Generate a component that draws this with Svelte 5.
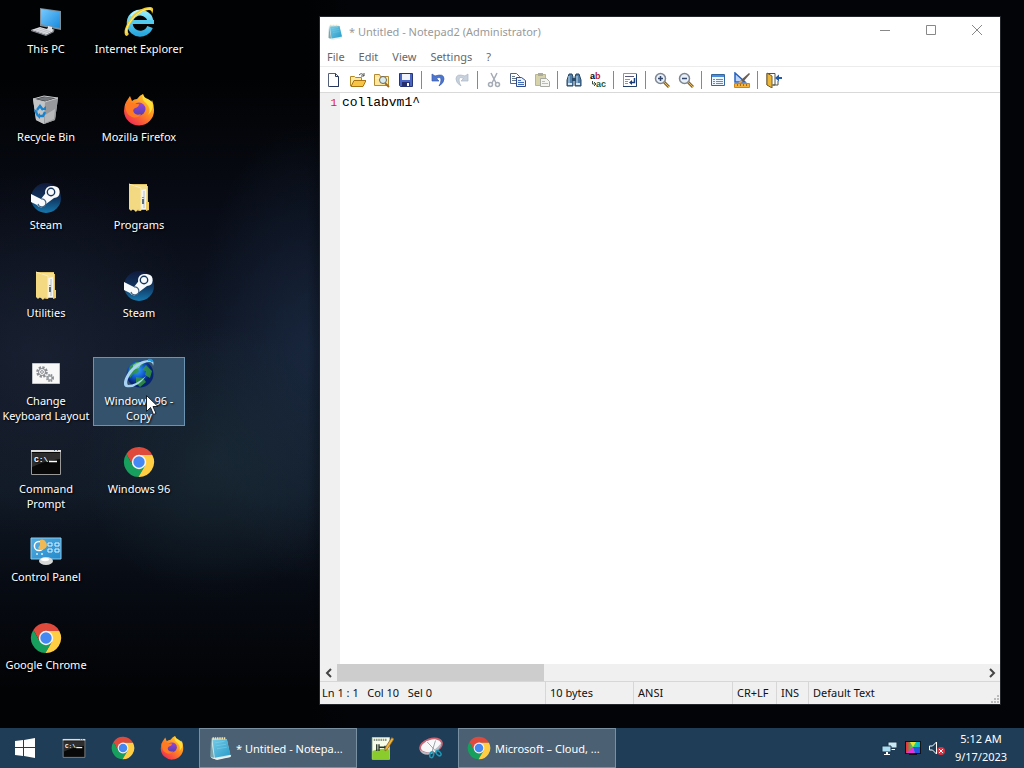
<script lang="ts">
  type Shortcut = { icon: string; label: string; selected?: boolean };
  type Task = { icon: string; label: string; open?: boolean };

  const shortcuts: Shortcut[] = [
    { icon: 'pc', label: 'This PC' },
    { icon: 'bin', label: 'Recycle Bin' },
    { icon: 'steam', label: 'Steam' },
    { icon: 'folder', label: 'Utilities' },
    { icon: 'gears', label: 'Change\nKeyboard Layout' },
    { icon: 'cmd', label: 'Command\nPrompt' },
    { icon: 'control', label: 'Control Panel' },
    { icon: 'chrome', label: 'Google Chrome' },
    { icon: 'ie', label: 'Internet Explorer' },
    { icon: 'firefox', label: 'Mozilla Firefox' },
    { icon: 'folder', label: 'Programs' },
    { icon: 'steam', label: 'Steam' },
    { icon: 'globe', label: 'Windows 96 -\nCopy', selected: true },
    { icon: 'chrome', label: 'Windows 96' },
  ];

  const menus = ['File', 'Edit', 'View', 'Settings', '?'];

  const tools = [
    ['New', 'Open', 'Browse', 'Save'],
    ['Undo', 'Redo'],
    ['Cut', 'Copy', 'Paste'],
    ['Find', 'Replace'],
    ['Word Wrap'],
    ['Zoom In', 'Zoom Out'],
    ['Scheme', 'Customize'],
    ['Exit'],
  ];
  const disabledTools = ['Redo', 'Cut', 'Paste'];

  const status = ['Ln 1 : 1   Col 10   Sel 0', '10 bytes', 'ANSI', 'CR+LF', 'INS', 'Default Text'];

  const tasks: Task[] = [
    { icon: 'cmd', label: 'Command Prompt' },
    { icon: 'chrome', label: 'Google Chrome' },
    { icon: 'firefox', label: 'Mozilla Firefox' },
    { icon: 'notepad', label: '* Untitled - Notepa...', open: true },
    { icon: 'notepadpp', label: 'Notepad++' },
    { icon: 'snip', label: 'Snipping Tool' },
    { icon: 'chrome', label: 'Microsoft – Cloud, ...', open: true },
  ];

  let text = $state('collabvm1^');
</script>

{#snippet appIcon(name: string)}
  <svg class="app-icon" viewBox="0 0 32 32" aria-hidden="true">
    {#if name === 'pc'}
      <path d="M10 2l21 3v19l-21-4z" fill="#7d8d99" />
      <path d="M11 3l19 3v16l-19-4z" fill="url(#screen)" />
      <path d="M18 20l4 1v2l3 1-6 2-4-2 3-2z" fill="#dfe5e9" />
      <path d="M1 24l9-3 14 4-8 4z" fill="#dcdde2" />
      <path d="M1 24l15 5 8-4v1l-8 4-15-5z" fill="#8b8e96" />
      <path d="M6 23l13 4M9 22l12 4M4 24l12 4" stroke="#a9acb4" stroke-width=".6" />
    {:else if name === 'bin'}
      <path d="M3 5l11-3 14 2-3 22-11 4-8-4z" fill="#b6b7ba" />
      <path d="M3 5l12 3-1 22-8-4z" fill="#c3c4c6" />
      <path d="M15 8l13-4-3 22-11 4z" fill="#97989b" />
      <path d="M3 5l11-3 14 2-13 4z" fill="#3f4347" stroke="#c6c7c9" />
      <path d="M7 5l8-2 9 1-8 3z" fill="#74787c" />
      <path d="M15 21l10-6-1 10-9 4z" fill="#cfcfcf" opacity=".6" />
      <g fill="none" stroke="#1783cf" stroke-width="2.4">
        <path d="M7 16l3-4 3 4M15 18l-2 4h-3M8 22l-2-4" />
      </g>
      <path d="M11 16h5v-4zM10 19v6l-3-3zM5 19l-1-4 4 2z" fill="#1783cf" />
    {:else if name === 'steam'}
      <circle cx="16" cy="16" r="15" fill="url(#steam)" />
      <path d="M1 12l10 5 7-9a6 6 0 1 1 6 8l-8 6a5 5 0 0 1-9 1l-6-3z" fill="#f8fafc" />
      <circle cx="21" cy="10" r="6" fill="#f8fafc" />
      <circle cx="21" cy="10" r="3.700" fill="#f8fafc" stroke="#17365c" stroke-width="1.400" />
      <path d="M8 22a4 4 0 1 0 3-5" fill="none" stroke="#426283" stroke-width="1.200" />
    {:else if name === 'folder'}
      <path d="M6 2h18v2h1v16h1v8h-7l-2 1-11-2z" fill="#e3c463" />
      <path d="M12 3h12v24H12z" fill="#f5df91" />
      <path d="M18 8l5-1v20h-5z" fill="#f4f5f0" />
      <path d="M20 9h2v17h-2z" fill="#d5dadd" />
      <path d="M19 17h2v5h-2z" fill="#5c6d7c" /><path d="M19 15h2v1h-2z" fill="#87a846" />
      <path d="M6 2l12 4v23l-3-2-2 3-3-3-2 2-2-2z" fill="#f3da82" />
      <path d="M6 2l12 4v22" fill="none" stroke="#fbecb5" />
      <path d="M23 20h3v8l-3 1z" fill="#efcb65" />
    {:else if name === 'gears'}
      <path d="M2.500 5.500h27v20h-27z" fill="#f8f8f8" stroke="#bfc5c9" />
      <g fill="none" stroke="#8b8f93">
        <circle cx="12" cy="14" r="4.500" stroke-width="2.600" stroke-dasharray="2.200 1.300" />
        <circle cx="12" cy="14" r="3.500" /><circle cx="12" cy="14" r="1.400" />
        <circle cx="20" cy="20" r="3" stroke-width="2" stroke-dasharray="1.600 .8" />
        <circle cx="20" cy="20" r="2" />
      </g>
    {:else if name === 'cmd'}
      <path d="M1.500 4.500h29v24h-29z" fill="#080808" stroke="#999" />
      <path d="M1 4h30v2H1z" fill="#ddd" />
      <path d="M2 7h28v6Q14 15 2 21z" fill="#444" opacity=".65" />
      <path d="M24 4h1v1h-1zM27 4h1v1h-1z" fill="#567" />
      <text x="4" y="16" class="prompt">C:\</text>
      <path d="M19 15.500h8" stroke="#fff" stroke-width="1.500" />
    {:else if name === 'control'}
      <path d="M1 4h30v21H1z" fill="url(#panel)" stroke="#8dccef" />
      <circle cx="9" cy="12" r="4.600" fill="#4aa6df" stroke="#fff" stroke-width="1.500" />
      <path d="M10 11V6a5 5 0 1 1-2 8z" fill="#f0b955" />
      <path d="M18 9h4v3h-4zM25 9h4v3h-4zM18 15h4v3h-4zM25 15h4v3h-4z" fill="#288acb" stroke="#e5f5ff" />
      <circle cx="7" cy="20" r="1" fill="#d9efff" /><circle cx="12" cy="20" r="1" fill="#d9efff" />
      <ellipse cx="16" cy="27" rx="7" ry="4" fill="#d5d8d6" /><ellipse cx="15" cy="25.500" rx="4" ry="1.700" fill="#fff" />
    {:else if name === 'chrome'}
      <path d="M16 9L3.300 8A15 15 0 0 1 29.300 9zM9.900 19.500L3.300 8 16 9z" fill="#de4a3c" />
      <path d="M9.900 19.500L3.300 8a15 15 0 0 0 12.100 23l6.700-11.500z" fill="#17a05d" />
      <path d="M22.100 19.500L15.400 31A15 15 0 0 0 29.300 9H16z" fill="#ffce43" />
      <circle cx="16" cy="16" r="7.200" fill="#f5f5f5" /><circle cx="16" cy="16" r="5.700" fill="#4587f3" />
    {:else if name === 'firefox'}
      <path d="M3 8l4-6 2 5q2-2 5-2 3-4 6-5l1 5q4 0 7 4l1-3q2 5 2 10A15 15 0 0 1 1 17Q1 12 3 8z" fill="url(#fox)" />
      <path d="M20 0q-2 6 3 9 6 6 2 12 7-7 4-13-2-2-4-3-4-1-5-5z" fill="#ffdf35" />
      <circle cx="16" cy="15" r="6.500" fill="url(#foxcore)" />
      <path d="M2 10q6-3 10 0h4q0 3-4 4-3 2-1 5 3 3 7 1-3 5-9 3-5-2-6-7z" fill="#ff7a22" />
    {:else if name === 'ie'}
      <path d="M27 21A10.500 10.500 0 1 1 27.500 15" fill="none" stroke="url(#ieblue)" stroke-width="6" />
      <path d="M9 16h22" stroke="#54c9ee" stroke-width="4" />
      <path d="M8 10q4-6 11-5" fill="none" stroke="#c7f4ff" stroke-width="1.500" />
      <path d="M4 30C-4 29 9 1 27 1q5 0 2 7 0-4-3-4C14 4 1 24 6 28z" fill="#f3ce28" />
      <path d="M3 27C3 18 16 2 28 3" fill="none" stroke="#fff19c" />
    {:else if name === 'globe'}
      <circle cx="17" cy="16" r="13.500" fill="url(#earth)" />
      <path d="M13 4h8l-2 4-4 1 1 5-6 2-3 4-2-5 2-7zM23 7l6 6-2 7-5-3 1-4-4-1zM13 19l7 1 3 4-6 5-4-4z" fill="#35953e" opacity=".85" />
      <path d="M10 7q5-4 9-2l-3 5-6 2z" fill="#a0ed9b" opacity=".65" />
      <path d="M3 29C-4 27 8 2 26 2q6-1 4 6 0-4-4-4C13 5 1 23 5 27q8 0 18-9-9 13-20 11z" fill="#a7d2f4" />
      <path d="M25 2q4-1 4 2" fill="none" stroke="#159bec" stroke-width="2" />
    {:else if name === 'notepad'}
      <path d="M5 3l20 1 5 24-20 3-6-2z" fill="#c7e4e9" />
      <path d="M4 29l18-1 9-3-1 3-18 4z" fill="#e8f1ef" />
      <path d="M6 5l19-1 5 21-21 4z" fill="url(#pad)" />
      <path d="M4 4l4 25-5-1z" fill="#7ca5ab" />
      <path d="M6 3h18" stroke="#f5dfa4" stroke-width="3" stroke-dasharray="2 1" />
      <path d="M10 9l12-2M11 13l13-2M12 17l13-2" stroke="#9bdcf2" opacity=".5" />
    {:else if name === 'notepadpp'}
      <path d="M3 2h23v29H3z" fill="#f7fce9" stroke="#c3d4b4" />
      <path d="M3 20q12-5 23-2v13H3z" fill="#8acc2b" />
      <path d="M9 11v9M12 11v9M12 15h6M20 13v4M18 15h5" stroke="#233324" stroke-width="1.800" />
      <path d="M5 5h18" stroke="#8b9787" stroke-width="3" stroke-dasharray="2 1" />
      <path d="M29 2l3 2-9 14-3 2v-4z" fill="#edb538" stroke="#865a2a" />
    {:else if name === 'snip'}
      <ellipse cx="16" cy="13" rx="15" ry="9" transform="rotate(-18 16 13)" fill="#f8f8fa" stroke="#cc6574" stroke-width="2.500" />
      <path d="M1 18q13 11 29-9-1 12-18 16Q3 25 1 18z" fill="#b8bcc7" />
      <path d="M10 7l13 15M22 5l-6 17" stroke="#fff" stroke-width="2.500" /><path d="M11 8l12 13M22 6l-5 16" stroke="#75828c" />
      <ellipse cx="17" cy="25" rx="2.500" ry="4" transform="rotate(15 17 25)" fill="none" stroke="#1b99b7" stroke-width="2" />
      <ellipse cx="26" cy="23" rx="2.500" ry="4" transform="rotate(-45 26 23)" fill="none" stroke="#1b99b7" stroke-width="2" />
    {/if}
  </svg>
{/snippet}

{#snippet toolIcon(name: string)}
  <svg class="tool-icon" viewBox="0 0 16 16" aria-hidden="true">
    {#if name === 'New'}
      <path d="M2.500 1.500h7l3 3v10h-10z" fill="#fff" stroke="#566079" /><path d="M9.500 1.500v3h3M12.500 5v9.500h-9" fill="none" stroke="#25355c" />
    {:else if name === 'Open'}
      <path d="M.5 14V4.500h4l1 1h6v3" fill="#ffe9a2" stroke="#b48821" /><path d="M1 14.500l3-6h12l-3 6z" fill="#f8c445" stroke="#a87410" />
      <path d="M9 3q3-3 5 1m0-3v3h-3" fill="none" stroke="#535353" />
    {:else if name === 'Browse'}
      <path d="M.5 13.500v-11h5l1 2h8v9z" fill="#ffe69a" stroke="#b18a34" /><path d="M1 6h13" stroke="#fff7ca" />
      <circle cx="9" cy="8" r="3.500" fill="#dbecee" stroke="#666" /><path d="M11 11l4 4" stroke="#9f6c24" stroke-width="2" />
    {:else if name === 'Save'}
      <path d="M1.500 1.500h13v13h-12l-1-1z" fill="#4966c4" stroke="#273574" /><path d="M4 2h8v6H4z" fill="#f0f2fb" />
      <path d="M4 10h8v4H4z" fill="#27306d" /><path d="M9 11h2v3H9z" fill="#fff" />
    {:else if name === 'Undo' || name === 'Redo'}
      <g transform={name === 'Redo' ? 'matrix(-1 0 0 1 16 0)' : undefined}>
        <path d="M2 2v7h7L6.500 6.500Q11 4 11 8q0 3-2 6 5-3 5-7 0-6-9-3z" fill={name === 'Redo' ? '#c9d2dc' : '#4d76cf'} stroke={name === 'Redo' ? '#a9b8c7' : '#3a5cae'} stroke-width=".7" />
      </g>
    {:else if name === 'Cut'}
      <g fill="none" stroke="#a5acb5" stroke-width="1.500"><path d="M5 1l5 10M11 1L6 11" /><circle cx="4.500" cy="12.500" r="2" /><circle cx="11.500" cy="12.500" r="2" /></g>
    {:else if name === 'Copy'}
      <path d="M.5 1.500h6l3 3v7h-9z" fill="#fff" stroke="#52648c" /><path d="M2 4.500h3M2 6.500h5M2 8.500h5" stroke="#678" />
      <path d="M6.500 5.500h5l4 3v6h-9z" fill="#eaf1ff" stroke="#304a8b" /><path d="M8 8.500h3M8 10.500h6M8 12.500h6" stroke="#446aba" />
    {:else if name === 'Paste'}
      <path d="M1.500 2.500h10v11h-10z" fill="#d5d2ac" stroke="#b8b690" /><path d="M4 1h5v3H4z" fill="#abac9c" />
      <path d="M6.500 6.500h6l3 3v5h-9z" fill="#f4f5f1" stroke="#a7aaa3" /><path d="M8 9.500h3M8 11.500h6" stroke="#b9bdb8" />
    {:else if name === 'Find'}
      <path d="M3 2h3l1 3v9H1V8zM10 2h3l2 6v6H9V5z" fill="#547fa8" stroke="#244560" /><path d="M6 6h4v3H6z" fill="#294a68" /><path d="M3 4v7M11 4v7" stroke="#c2def1" />
      <path d="M2 12h4M10 12h4" stroke="#d8e9f5" stroke-width="2" />
    {:else if name === 'Replace'}
      <text x="0" y="7" class="replace">a<tspan fill="#b01e36">b</tspan></text><text x="6" y="15" class="replace" fill="#285a36">ac</text>
      <path d="M2.500 9v3h3M4 10l2 2-2 2" fill="none" stroke="#3a4d42" />
    {:else if name === 'Word Wrap'}
      <path d="M1.500 1.500h13v13h-13z" fill="#fff" stroke="#8397ae" /><path d="M1 14.500h13.500V2" fill="none" stroke="#203d69" />
      <path d="M3 4.500h9" stroke="#557" /><path d="M3 7.500h5M3 9.500h3M3 11.500h3" stroke="#e07a53" /><path d="M12.500 6v4.500H9" fill="none" stroke="#173b76" stroke-width="1.500" /><path d="M10 8v5l-3-2.500z" fill="#173b76" />
    {:else if name === 'Zoom In' || name === 'Zoom Out'}
      <path d="M9 9l6 6" stroke="#806846" stroke-width="3" /><path d="M10 10l5 5" stroke="#e6bc5d" />
      <circle cx="6.500" cy="6.500" r="5" fill="#e9f0f7" stroke="#7d8794" stroke-width="1.500" /><path d="M4 6.500h5" stroke="#33476d" stroke-width="1.500" />
      {#if name === 'Zoom In'}<path d="M6.500 4v5" stroke="#33476d" stroke-width="1.500" />{/if}
    {:else if name === 'Scheme'}
      <path d="M1.500 2.500h13v11h-13z" fill="#eef6ff" stroke="#35669b" /><path d="M2 4h12" stroke="#4d8be0" stroke-width="2" /><path d="M3 7.500h2m1 0h7M3 9.500h2m1 0h7M3 11.500h2m1 0h7" stroke="#668dc1" />
    {:else if name === 'Customize'}
      <path d="M1 1v9h10z" fill="#bdd6ff" stroke="#2861ba" stroke-width="1.500" /><path d="M15 1L7 8l-2 3 4-1 7-8z" fill="#6b5d50" /><path d="M5 11l3-2" stroke="#e9a14b" stroke-width="2" />
      <path d="M.5 11.500h15v4H.5z" fill="#f1b13c" stroke="#c9861f" /><path d="M3.500 12v2M6.500 12v2M9.500 12v2M12.500 12v2" stroke="#a26b18" />
    {:else if name === 'Exit'}
      <path d="M1 1.500h8V13H1z" fill="#fff" stroke="#525446" /><path d="M1 1l5 3v12l-5-3z" fill="#eab73b" stroke="#765c26" /><path d="M7 13h5V9" fill="none" stroke="#525446" />
      <path d="M16 7h-3V9.500L9 6l4-3.500V5h3z" fill="#235ba7" />
    {/if}
  </svg>
{/snippet}

<svg class="defs" aria-hidden="true">
  <defs>
    <linearGradient id="screen" x2="1" y2="1"><stop stop-color="#78caff" /><stop offset="1" stop-color="#168bdd" /></linearGradient>
    <linearGradient id="steam" x2="0" y2="1"><stop stop-color="#101a3c" /><stop offset=".5" stop-color="#11345e" /><stop offset="1" stop-color="#1578ae" /></linearGradient>
    <linearGradient id="panel" x2="1" y2="1"><stop stop-color="#53acdf" /><stop offset="1" stop-color="#248bcc" /></linearGradient>
    <linearGradient id="fox" x1="1" x2=".2" y2="1"><stop stop-color="#ffe13c" /><stop offset=".5" stop-color="#ff8b20" /><stop offset="1" stop-color="#f12657" /></linearGradient>
    <linearGradient id="foxcore" x2="0" y2="1"><stop stop-color="#9b45d5" /><stop offset="1" stop-color="#5440b3" /></linearGradient>
    <linearGradient id="ieblue" x2="0" y2="1"><stop stop-color="#8ce9fb" /><stop offset="1" stop-color="#29a8df" /></linearGradient>
    <radialGradient id="earth" cx=".4" cy=".35"><stop stop-color="#32a4ff" /><stop offset=".6" stop-color="#1155cb" /><stop offset="1" stop-color="#072474" /></radialGradient>
    <linearGradient id="pad" x2="1" y2="1"><stop stop-color="#75cbe6" /><stop offset="1" stop-color="#279bc9" /></linearGradient>
    <linearGradient id="rainbow"><stop stop-color="#f02b35" /><stop offset=".5" stop-color="#2adf65" /><stop offset="1" stop-color="#06b6ef" /></linearGradient>
  </defs>
</svg>

<div class="screen">
  <main class="desktop">
    <nav class="shortcuts" aria-label="Desktop">
      {#each shortcuts as item}
        <button class="shortcut" class:shortcut--selected={item.selected}>
          {@render appIcon(item.icon)}
          <span>{item.label}</span>
          {#if item.selected}
            <svg class="cursor" viewBox="0 0 12 20" aria-hidden="true">
              <path d="M.5.5v16l4-4 3 7 2.500-1-3-7h5z" fill="#fff" stroke="#17202b" />
            </svg>
          {/if}
        </button>
      {/each}
    </nav>

    <section class="window" aria-label="Notepad2">
      <header class="titlebar">
        <div class="titlebar__icon">{@render appIcon('notepad')}</div>
        <h1>* Untitled - Notepad2 (Administrator)</h1>
        <button aria-label="Minimize"><svg viewBox="0 0 12 12"><path d="M1 6.500h10" /></svg></button>
        <button aria-label="Maximize"><svg viewBox="0 0 12 12"><path d="M1.500 1.500h9v9h-9z" /></svg></button>
        <button aria-label="Close"><svg viewBox="0 0 12 12"><path d="M1 1l10 10M11 1L1 11" /></svg></button>
      </header>

      <div class="menubar">
        {#each menus as menu}
          <button>{menu}</button>
        {/each}
      </div>

      <div class="toolbar" role="toolbar" aria-label="Tools">
        {#each tools as group}
          <div class="toolbar__group">
            {#each group as tool}
              <button aria-label={tool} disabled={disabledTools.includes(tool)}>{@render toolIcon(tool)}</button>
            {/each}
          </div>
        {/each}
      </div>

      <div class="editor">
        <div class="editor__gutter">1</div>
        <textarea aria-label="Text" spellcheck="false" bind:value={text}></textarea>
      </div>

      <div class="scrollbar">
        <button aria-label="Scroll left"><svg viewBox="0 0 8 10"><path d="M6 1L2 5l4 4" /></svg></button>
        <div class="scrollbar__track"><div class="scrollbar__thumb"></div></div>
        <button aria-label="Scroll right"><svg viewBox="0 0 8 10"><path d="M2 1l4 4-4 4" /></svg></button>
      </div>

      <footer class="statusbar">
        {#each status as part}
          <span>{part}</span>
        {/each}
        <svg class="statusbar__grip" viewBox="0 0 9 9" aria-hidden="true">
          <path d="M7 1h2v2H7zM7 4h2v2H7zM4 4h2v2H4zM7 7h2v2H7zM4 7h2v2H4zM1 7h2v2H1z" fill="#bbb" />
        </svg>
      </footer>
    </section>
  </main>

  <footer class="taskbar">
    <button class="task" aria-label="Start">
      <svg class="start-icon" viewBox="0 0 20 20"><path d="M0 3l8-1v7H0zM9 2l11-2v9H9zM0 10h8v8l-8-1zM9 10h11v10L9 18z" fill="#fff" /></svg>
    </button>
    {#each tasks as task}
      <button class="task" class:task--open={task.open} aria-label={task.label}>
        {@render appIcon(task.icon)}
        {#if task.open}<span>{task.label}</span>{/if}
      </button>
    {/each}
    <div class="tray">
      <button aria-label="Network">
        <svg viewBox="0 0 16 16"><path d="M7 2h9v6H7z" fill="#c9e9f5" stroke="#1c3144" /><path d="M10 9h4v1h-4z" fill="#fff" /><path d="M1 6h9v6H1z" fill="#a9dcf1" stroke="#1c3144" /><path d="M5 12h2v2h2v1H3v-1h2z" fill="#fff" /></svg>
      </button>
      <button aria-label="Display">
        <svg viewBox="0 0 16 16"><path d="M0 1h16v13H0z" fill="#111" /><path d="M1 2h14v11H1z" fill="url(#rainbow)" /><path d="M8 7L1 13h9z" fill="#e532dc" /><path d="M8 7l2 6h5V7z" fill="#2455e7" /><path d="M8 7L5 2h6z" fill="#ece42c" /><path d="M4 14h8v1H4z" fill="#111" /></svg>
      </button>
      <button aria-label="Volume muted">
        <svg viewBox="0 0 16 16"><path d="M.5 6h3l4-4v12l-4-4h-3z" fill="none" stroke="#fff" /><circle cx="12" cy="11" r="4" fill="#d83443" /><path d="M10 9l4 4M14 9l-4 4" stroke="#fff" /></svg>
      </button>
      <button class="clock">5:12 AM<br />9/17/2023</button>
    </div>
  </footer>
</div>

<style>
  :global(body) {
    margin: 0;
    font-family: "Noto Sans", "Open Sans", sans-serif;
    font-size: 11px;
  }

  button {
    margin: 0;
    padding: 0;
    border: 0;
    background: none;
    color: inherit;
    font: inherit;
  }

  .defs {
    position: absolute;
    width: 0;
    height: 0;
  }

  .screen {
    display: flex;
    flex-direction: column;
    min-height: 100vh;
    background:
      linear-gradient(90deg, transparent 30%, #020407 34%),
      radial-gradient(ellipse 13% 18% at 21% 60%, rgba(30, 52, 62, 0.5), transparent),
      radial-gradient(ellipse 11% 30% at 30% 46%, rgba(29, 47, 74, 0.6), transparent),
      radial-gradient(ellipse 16% 24% at 4% 46%, rgba(32, 40, 58, 0.5), transparent),
      linear-gradient(#010203 10%, #090d18 30%, #101827 46%, #101925 64%, #070b13 76%, #020305 90%);
  }

  .desktop {
    position: relative;
    flex: 1;
  }

  .shortcuts {
    display: grid;
    grid-auto-flow: column;
    grid-template-rows: repeat(8, 88px);
    grid-auto-columns: 92px;
    column-gap: 1px;
    justify-content: start;
    padding-top: 5px;
  }

  .shortcut {
    position: relative;
    display: flex;
    flex-direction: column;
    align-items: center;
    align-self: start;
    gap: 3px;
    min-height: 69px;
    border: 1px solid transparent;
    box-sizing: border-box;
    color: #fff;
    line-height: 15px;
    white-space: pre;
    text-shadow: 1px 1px 2px #000;
  }

  .shortcut .app-icon {
    flex: none;
  }

  .shortcut--selected {
    border-color: #6c93b2;
    background: #34526c;
  }

  .app-icon {
    display: block;
    width: 32px;
    height: 32px;
  }

  .prompt {
    font: bold 8px "Liberation Mono", monospace;
    fill: #fff;
  }

  .cursor {
    position: absolute;
    left: 52px;
    top: 37px;
    width: 12px;
    height: 20px;
  }

  .window {
    position: absolute;
    inset: 17px 24px 24px 320px;
    display: flex;
    flex-direction: column;
    background: #fff;
    box-shadow: 0 0 0 1px #23262a;
  }

  .titlebar {
    display: flex;
    align-items: center;
    height: 29px;
    color: #999;
  }

  .titlebar__icon {
    padding: 0 6px 0 7px;
  }

  .titlebar__icon .app-icon {
    width: 16px;
    height: 16px;
  }

  .titlebar h1 {
    flex: 1;
    margin: 0;
    font-size: 11px;
    font-weight: 400;
  }

  .titlebar button {
    width: 46px;
    height: 29px;
  }

  .titlebar button svg {
    width: 12px;
    height: 12px;
    fill: none;
    stroke: #888;
  }

  .menubar {
    display: flex;
    height: 20px;
    border-bottom: 1px solid #ececec;
    color: #666;
  }

  .menubar button {
    padding: 0 7px;
  }

  .toolbar {
    display: flex;
    align-items: center;
    height: 25px;
    padding-left: 2px;
    border-bottom: 1px solid #d9d9d9;
  }

  .toolbar__group {
    display: flex;
    align-items: center;
  }

  .toolbar__group + .toolbar__group::before {
    content: "";
    width: 1px;
    height: 18px;
    margin: 0 4px 0 3px;
    background: #888;
  }

  .toolbar button {
    display: grid;
    place-items: center;
    width: 24px;
    height: 22px;
  }

  .tool-icon {
    width: 16px;
    height: 16px;
  }

  .replace {
    font: bold 9px "Liberation Sans", sans-serif;
  }

  .editor {
    display: flex;
    flex: 1;
    min-height: 0;
    font: 13px/20px "Liberation Mono", monospace;
  }

  .editor__gutter {
    width: 20px;
    padding-right: 3px;
    box-sizing: border-box;
    background: #f0f0f0;
    color: #e02020;
    font-size: 11px;
    text-align: right;
  }

  textarea {
    flex: 1;
    padding: 0 2px;
    border: 0;
    outline: 0;
    resize: none;
    background: #fff;
    color: #000;
    font: inherit;
  }

  .scrollbar {
    display: flex;
    height: 17px;
    background: #f0f0f0;
  }

  .scrollbar button {
    display: grid;
    place-items: center;
    width: 17px;
  }

  .scrollbar button svg {
    width: 8px;
    height: 10px;
    fill: none;
    stroke: #444;
    stroke-width: 2;
  }

  .scrollbar__track {
    flex: 1;
  }

  .scrollbar__thumb {
    width: 32%;
    height: 100%;
    background: #cdcdcd;
  }

  .statusbar {
    position: relative;
    display: grid;
    grid-template-columns: 225px 88px 99px 44px 32px 1fr;
    height: 22px;
    border-top: 1px solid #d7d7d7;
    background: #f0f0f0;
    color: #111;
    line-height: 22px;
    white-space: pre;
  }

  .statusbar span {
    padding-left: 4px;
    border-left: 1px solid #d7d7d7;
  }

  .statusbar span:first-child {
    padding-left: 2px;
    border-left: 0;
  }

  .statusbar__grip {
    position: absolute;
    right: 1px;
    bottom: 1px;
    width: 9px;
    height: 9px;
  }

  .taskbar {
    display: flex;
    gap: 1px;
    height: 40px;
    background: #1f3d56;
    color: #fff;
  }

  .task {
    display: flex;
    align-items: center;
    justify-content: center;
    width: 48px;
    white-space: nowrap;
  }

  .task:first-child {
    width: 49px;
  }

  .task .app-icon {
    flex: none;
    width: 24px;
    height: 24px;
  }

  .start-icon {
    width: 20px;
    height: 20px;
  }

  .task--open {
    justify-content: start;
    gap: 4px;
    box-sizing: border-box;
    width: 158px;
    margin-left: 2px;
    padding: 0 8px;
    border: 1px solid #7890a2;
    background: #4b6072;
  }

  .tray {
    display: flex;
    align-items: center;
    gap: 8px;
    margin-left: auto;
    padding-right: 15px;
  }

  .tray svg {
    display: block;
    width: 16px;
    height: 16px;
  }

  .tray .clock {
    min-width: 56px;
    line-height: 18px;
  }
</style>
